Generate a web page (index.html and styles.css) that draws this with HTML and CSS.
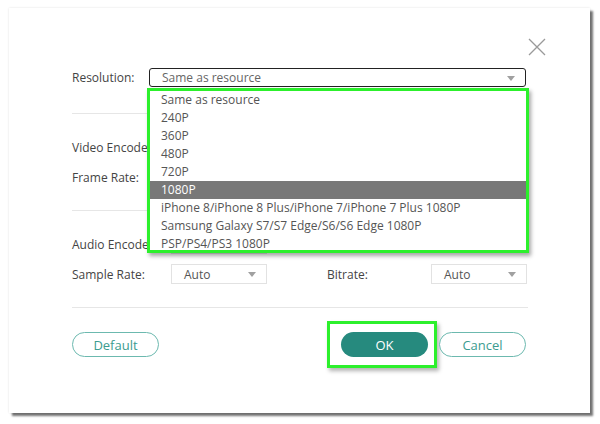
FILE: index.html
```html
<!DOCTYPE html>
<html lang="en">
<head>
    <meta charset="UTF-8">
    <meta name="viewport" content="width=device-width, initial-scale=1.0">
    <title>Output Settings</title>
    <link rel="stylesheet" href="styles.css">
</head>
<body>
    <div class="dialog">
        <button class="close" aria-label="Close">
            <svg width="18" height="18" viewBox="0 0 18 18">
                <path d="M1 1L17 17M17 1L1 17" stroke="#9a9a9a" stroke-width="1.3" fill="none"/>
            </svg>
        </button>

        <div class="section first">
            <div class="row">
                <span class="label res-label">Resolution:</span>
                <div class="select wide active">
                    <span>Same as resource</span>
                    <i class="arrow"></i>
                </div>
            </div>

            <ul class="dropdown">
                <li>Same as resource</li>
                <li>240P</li>
                <li>360P</li>
                <li>480P</li>
                <li>720P</li>
                <li class="selected">1080P</li>
                <li>iPhone 8/iPhone 8 Plus/iPhone 7/iPhone 7 Plus 1080P</li>
                <li>Samsung Galaxy S7/S7 Edge/S6/S6 Edge 1080P</li>
                <li>PSP/PS4/PS3 1080P</li>
            </ul>
        </div>

        <div class="section">
            <div class="row">
                <span class="label">Video Encoder:</span>
                <div class="select small"><i class="arrow"></i></div>
            </div>
            <div class="row">
                <span class="label">Frame Rate:</span>
                <div class="select small"><i class="arrow"></i></div>
            </div>
        </div>

        <div class="section">
            <div class="row">
                <span class="label">Audio Encoder:</span>
                <div class="select small"><i class="arrow"></i></div>
            </div>
            <div class="row">
                <span class="label">Sample Rate:</span>
                <div class="select small"><span>Auto</span><i class="arrow"></i></div>
                <span class="label side">Bitrate:</span>
                <div class="select small"><span>Auto</span><i class="arrow"></i></div>
            </div>
        </div>

        <div class="buttons">
            <button class="btn outline">Default</button>
            <div class="right">
                <div class="highlight">
                    <button class="btn filled">OK</button>
                </div>
                <button class="btn outline">Cancel</button>
            </div>
        </div>
    </div>
</body>
</html>
```

FILE: styles.css
```css
* {
    margin: 0;
    padding: 0;
    box-sizing: border-box;
}

body {
    font-family: "Open Sans", "Noto Sans", sans-serif;
    font-size: 12px;
    color: #444;
    background: #fff;
    width: 600px;
    height: 424px;
    overflow: hidden;
}

.dialog {
    position: relative;
    width: 581px;
    height: 405px;
    margin: 8px 0 0 9px;
    padding: 59px 62px 0 63px;
    background: #fff;
    box-shadow: 3px 3px 2px rgba(0, 0, 0, 0.55), 0 0 2px rgba(0, 0, 0, 0.12);
}

.close {
    position: absolute;
    top: 30px;
    right: 44px;
    width: 18px;
    height: 18px;
    border: none;
    background: none;
    cursor: pointer;
}

.close svg {
    display: block;
}

.section {
    position: relative;
    display: flex;
    flex-direction: column;
    gap: 10px;
    padding: 23px 0 23px;
    border-bottom: 1px solid #e6e6e6;
}

.section.first {
    padding: 0 0 26px;
}

.row {
    display: flex;
    align-items: center;
    height: 20px;
}

.label {
    width: 99px;
    flex-shrink: 0;
    color: #444;
}

.res-label {
    width: 77px;
}

.label.side {
    width: 104px;
    margin-left: 60px;
}

.select {
    position: relative;
    display: flex;
    align-items: center;
    height: 20px;
    border: 1px solid #e2e2e2;
    background: #fff;
    color: #555;
}

.select span {
    padding-left: 12px;
}

.select.small {
    width: 96px;
}

.select.wide {
    width: 377px;
    height: 19px;
    border: 1px solid #222;
    border-radius: 3px;
    color: #666;
}

.arrow {
    position: absolute;
    right: 10px;
    top: 7px;
    width: 0;
    height: 0;
    border-left: 4px solid transparent;
    border-right: 4px solid transparent;
    border-top: 5px solid #a0a0a0;
}

.dropdown {
    position: absolute;
    top: 21px;
    left: 75px;
    width: 382px;
    height: 165px;
    overflow: hidden;
    list-style: none;
    background: #fff;
    border: 3px solid #2cf02c;
    box-shadow: 2px 3px 4px rgba(0, 0, 0, 0.35);
    z-index: 2;
}

.dropdown li {
    height: 18px;
    line-height: 18px;
    padding-left: 11px;
    color: #555;
    white-space: nowrap;
}

.dropdown li.selected {
    background: #787878;
    color: #fff;
}

.buttons {
    display: flex;
    justify-content: space-between;
    align-items: center;
    padding-top: 24px;
    padding-right: 2px;
}

.right {
    display: flex;
    align-items: center;
}

.highlight {
    padding: 8px 6px 8px 11px;
    margin: -11px 2px -11px 0;
    border: 3px solid #2cf02c;
    box-shadow: 2px 3px 4px rgba(0, 0, 0, 0.3);
}

.btn {
    width: 87px;
    height: 25px;
    border-radius: 13px;
    font-family: inherit;
    font-size: 13px;
    cursor: pointer;
}

.btn.outline {
    border: 1px solid #6cb9af;
    background: #fff;
    color: #3c9c90;
}

.btn.filled {
    display: block;
    border: none;
    background: #268a7e;
    color: #fff;
}
```
